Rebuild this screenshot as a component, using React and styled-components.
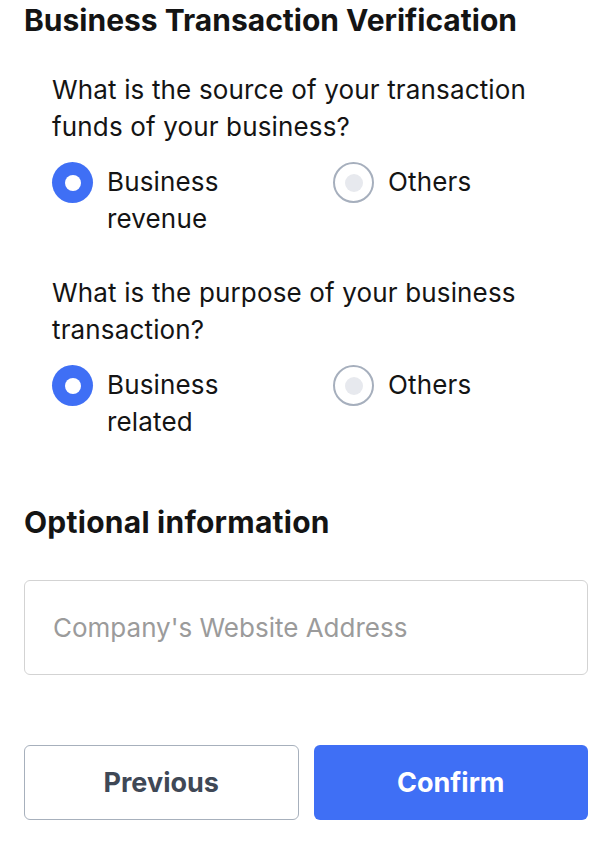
import React, { useState } from 'react';
import styled, { createGlobalStyle } from 'styled-components';

const GlobalStyle = createGlobalStyle`
  body {
    margin: 0;
    background: #ffffff;
    font-family: Inter, "Noto Sans", "Liberation Sans", sans-serif;
    color: #141414;
  }
`;

const Page = styled.div`
  width: 610px;
  box-sizing: border-box;
  padding: 3px 22px 24px 24px;
`;

const Title = styled.h1`
  margin: 0;
  font-size: 30px;
  line-height: 34px;
  font-weight: 700;
`;

const Questions = styled.div`
  padding-left: 28px;
  margin-top: 34px;
  display: flex;
  flex-direction: column;
  gap: 37px;
`;

const Question = styled.div`
  display: flex;
  flex-direction: column;
  gap: 18px;
`;

const Prompt = styled.p`
  margin: 0;
  font-size: 26px;
  line-height: 37px;
  letter-spacing: 0.15px;
  max-width: 500px;
`;

const Options = styled.div`
  display: grid;
  grid-template-columns: 281px 1fr;
`;

const Option = styled.label`
  display: flex;
  align-items: flex-start;
  gap: 14px;
  cursor: pointer;
`;

const Radio = styled.span`
  flex: none;
  width: 41px;
  height: 41px;
  margin-top: -1px;
  box-sizing: border-box;
  border-radius: 50%;
  display: flex;
  align-items: center;
  justify-content: center;
  background: ${(p) => (p.$checked ? '#3f6ff5' : '#ffffff')};
  border: ${(p) => (p.$checked ? 'none' : '2px solid #a6afbd')};

  &::after {
    content: '';
    width: ${(p) => (p.$checked ? '16px' : '18px')};
    height: ${(p) => (p.$checked ? '16px' : '18px')};
    border-radius: 50%;
    background: ${(p) => (p.$checked ? '#ffffff' : '#e7e9ee')};
  }
`;

const OptionText = styled.span`
  font-size: 26px;
  line-height: 37px;
  letter-spacing: 0.15px;
  max-width: 150px;
`;

const SectionTitle = styled.h2`
  margin: 65px 0 0;
  font-size: 30px;
  line-height: 34px;
  font-weight: 700;
  letter-spacing: 0.25px;
`;

const Input = styled.input`
  display: block;
  width: 100%;
  height: 95px;
  margin-top: 41px;
  box-sizing: border-box;
  padding: 0 28px;
  border: 1.5px solid #d3d3d3;
  border-radius: 6px;
  font-family: inherit;
  font-size: 26px;
  color: #141414;
  outline: none;

  &::placeholder {
    color: #9b9b9b;
  }
`;

const Actions = styled.div`
  display: grid;
  grid-template-columns: 1fr 1fr;
  gap: 15px;
  margin-top: 70px;
`;

const Button = styled.button`
  height: 75px;
  box-sizing: border-box;
  border-radius: 6px;
  font-family: inherit;
  font-size: 27px;
  font-weight: 700;
  cursor: pointer;
  border: ${(p) => (p.$primary ? 'none' : '1.5px solid #a7b0bc')};
  background: ${(p) => (p.$primary ? '#3f6ff5' : '#ffffff')};
  color: ${(p) => (p.$primary ? '#ffffff' : '#3f4856')};
`;

const QUESTIONS = [
  {
    id: 'source',
    prompt: 'What is the source of your transaction funds of your business?',
    options: ['Business revenue', 'Others'],
  },
  {
    id: 'purpose',
    prompt: 'What is the purpose of your business transaction?',
    options: ['Business related', 'Others'],
  },
];

const App = () => {
  const [answers, setAnswers] = useState({ source: 0, purpose: 0 });

  return (
    <>
      <GlobalStyle />
      <Page>
        <Title>Business Transaction Verification</Title>
        <Questions>
          {QUESTIONS.map((q) => (
            <Question key={q.id}>
              <Prompt>{q.prompt}</Prompt>
              <Options>
                {q.options.map((opt, i) => (
                  <Option
                    key={opt}
                    onClick={() => setAnswers({ ...answers, [q.id]: i })}
                  >
                    <Radio $checked={answers[q.id] === i} />
                    <OptionText>{opt}</OptionText>
                  </Option>
                ))}
              </Options>
            </Question>
          ))}
        </Questions>
        <SectionTitle>Optional information</SectionTitle>
        <Input placeholder="Company's Website Address" />
        <Actions>
          <Button>Previous</Button>
          <Button $primary>Confirm</Button>
        </Actions>
      </Page>
    </>
  );
};

export default App;
